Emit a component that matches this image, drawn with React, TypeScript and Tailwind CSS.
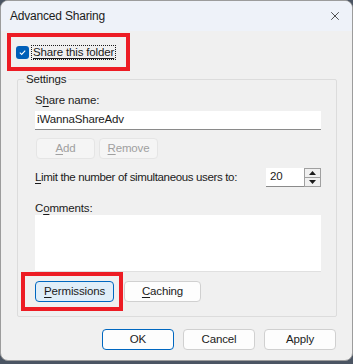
import { X } from "lucide-react";

const font = { fontFamily: '"Liberation Sans", Arial, sans-serif' };

function Btn({
  u,
  rest,
  kind = "normal",
  w = "w-[72px]",
}: {
  u: string;
  rest: string;
  kind?: "normal" | "default" | "focused" | "disabled";
  w?: string;
}) {
  const styles = {
    normal: "bg-[#fdfdfd] border-[#d0d0d0] text-[#1b1b1b]",
    default: "bg-[#fdfdfd] border-[#0067c0] text-[#1b1b1b]",
    focused: "bg-[#e0eef9] border-[#0067c0] text-[#1b1b1b]",
    disabled: "bg-[#f5f5f5] border-[#e5e5e5] text-[#a0a0a0]",
  }[kind];
  return (
    <button
      className={`${w} h-[21px] rounded-[4px] border text-[11.5px] tracking-[-0.15px] leading-none flex items-center justify-center ${styles}`}
    >
      <span className="underline underline-offset-2">{u}</span>
      {rest}
    </button>
  );
}

export default function App() {
  return (
    <div className="w-[353px] h-[364px] bg-[#4b5563]" style={font}>
      <div className="w-[353px] h-[361px] rounded-[8px] border border-[#9c9c9c] bg-[#f0f0f0] overflow-hidden flex flex-col text-[#1b1b1b] text-[11.5px] tracking-[-0.15px]">
        {/* Title bar */}
        <div className="h-[30px] bg-[#eef2f9] flex items-center justify-between pl-[9px] pr-[10px] shrink-0">
          <span className="text-[12px] tracking-[-0.2px]">Advanced Sharing</span>
          <X className="w-[14px] h-[14px] text-[#1b1b1b]" strokeWidth={1.3} />
        </div>

        {/* Share this folder */}
        <div className="ml-[6px] mt-[2px] w-[123px] h-[38px] border-4 border-[#ed1c24] flex items-center pl-[5px]">
          <div className="w-[13px] h-[13px] rounded-[3px] bg-[#005fb8] flex items-center justify-center">
            <svg width="9" height="9" viewBox="0 0 10 10" fill="none">
              <path d="M2 5.2 L4.1 7.2 L8 3" stroke="white" strokeWidth="1.2" />
            </svg>
          </div>
          <span className="ml-[2px] px-[1px] border border-dotted border-[#1b1b1b] leading-[13px] underline underline-offset-2">
            Share this folder
          </span>
        </div>

        {/* Settings group */}
        <fieldset className="ml-[16px] mr-[15px] mt-[1px] border border-[#dcdcdc] rounded-[2px]">
          <legend className="ml-[6px] px-[2px] leading-[14px]">Settings</legend>
          <div className="pl-[17px] pr-[15px] pb-[5px]">
            <div className="mt-[7px] leading-[14px]">
              S<span className="underline underline-offset-2">h</span>are name:
            </div>
            <div className="mt-[4px] h-[19px] bg-white border-b border-[#8a8a8a] flex items-center pl-[2px]">
              iWannaShareAdv
            </div>
            <div className="mt-[8px] flex gap-[4px] pl-[1px]">
              <Btn u="A" rest="dd" kind="disabled" w="w-[59px]" />
              <Btn u="R" rest="emove" kind="disabled" w="w-[59px]" />
            </div>
            <div className="mt-[9px] flex items-center justify-between">
              <span className="tracking-[-0.35px]">
                <span className="underline underline-offset-2">L</span>imit the number of simultaneous users to:
              </span>
              <div className="flex items-center">
                <div className="w-[38px] h-[19px] bg-white border-b border-[#8a8a8a] flex items-center pl-[4px]">
                  20
                </div>
                <div className="w-[17px] h-[19px] border border-[#a0a0a0] flex flex-col bg-[#f0f0f0]">
                  <div className="flex-1 flex items-center justify-center border-b border-[#a0a0a0]">
                    <svg width="7" height="4" viewBox="0 0 7 4">
                      <path d="M3.5 0 L7 4 L0 4 Z" fill="#1b1b1b" />
                    </svg>
                  </div>
                  <div className="flex-1 flex items-center justify-center">
                    <svg width="7" height="4" viewBox="0 0 7 4">
                      <path d="M0 0 L7 0 L3.5 4 Z" fill="#1b1b1b" />
                    </svg>
                  </div>
                </div>
              </div>
            </div>
            <div className="mt-[14px] leading-[14px]">
              C<span className="underline underline-offset-2">o</span>mments:
            </div>
            <div className="h-[57px] bg-white border-b border-[#e0e0e0]" />
            <div className="-ml-[14px] flex items-center gap-[1px]">
              <div className="w-[102px] h-[39px] border-4 border-[#ed1c24] flex items-center pl-[10px]">
                <Btn u="P" rest="ermissions" kind="focused" w="w-[79px]" />
              </div>
              <Btn u="C" rest="aching" w="w-[77px]" />
            </div>
          </div>
        </fieldset>

        {/* Dialog buttons */}
        <div className="mt-[12px] flex justify-end gap-[9px] pr-[16px]">
          <Btn u="" rest="OK" kind="default" />
          <Btn u="" rest="Cancel" />
          <Btn u="" rest="Apply" />
        </div>
      </div>
    </div>
  );
}
